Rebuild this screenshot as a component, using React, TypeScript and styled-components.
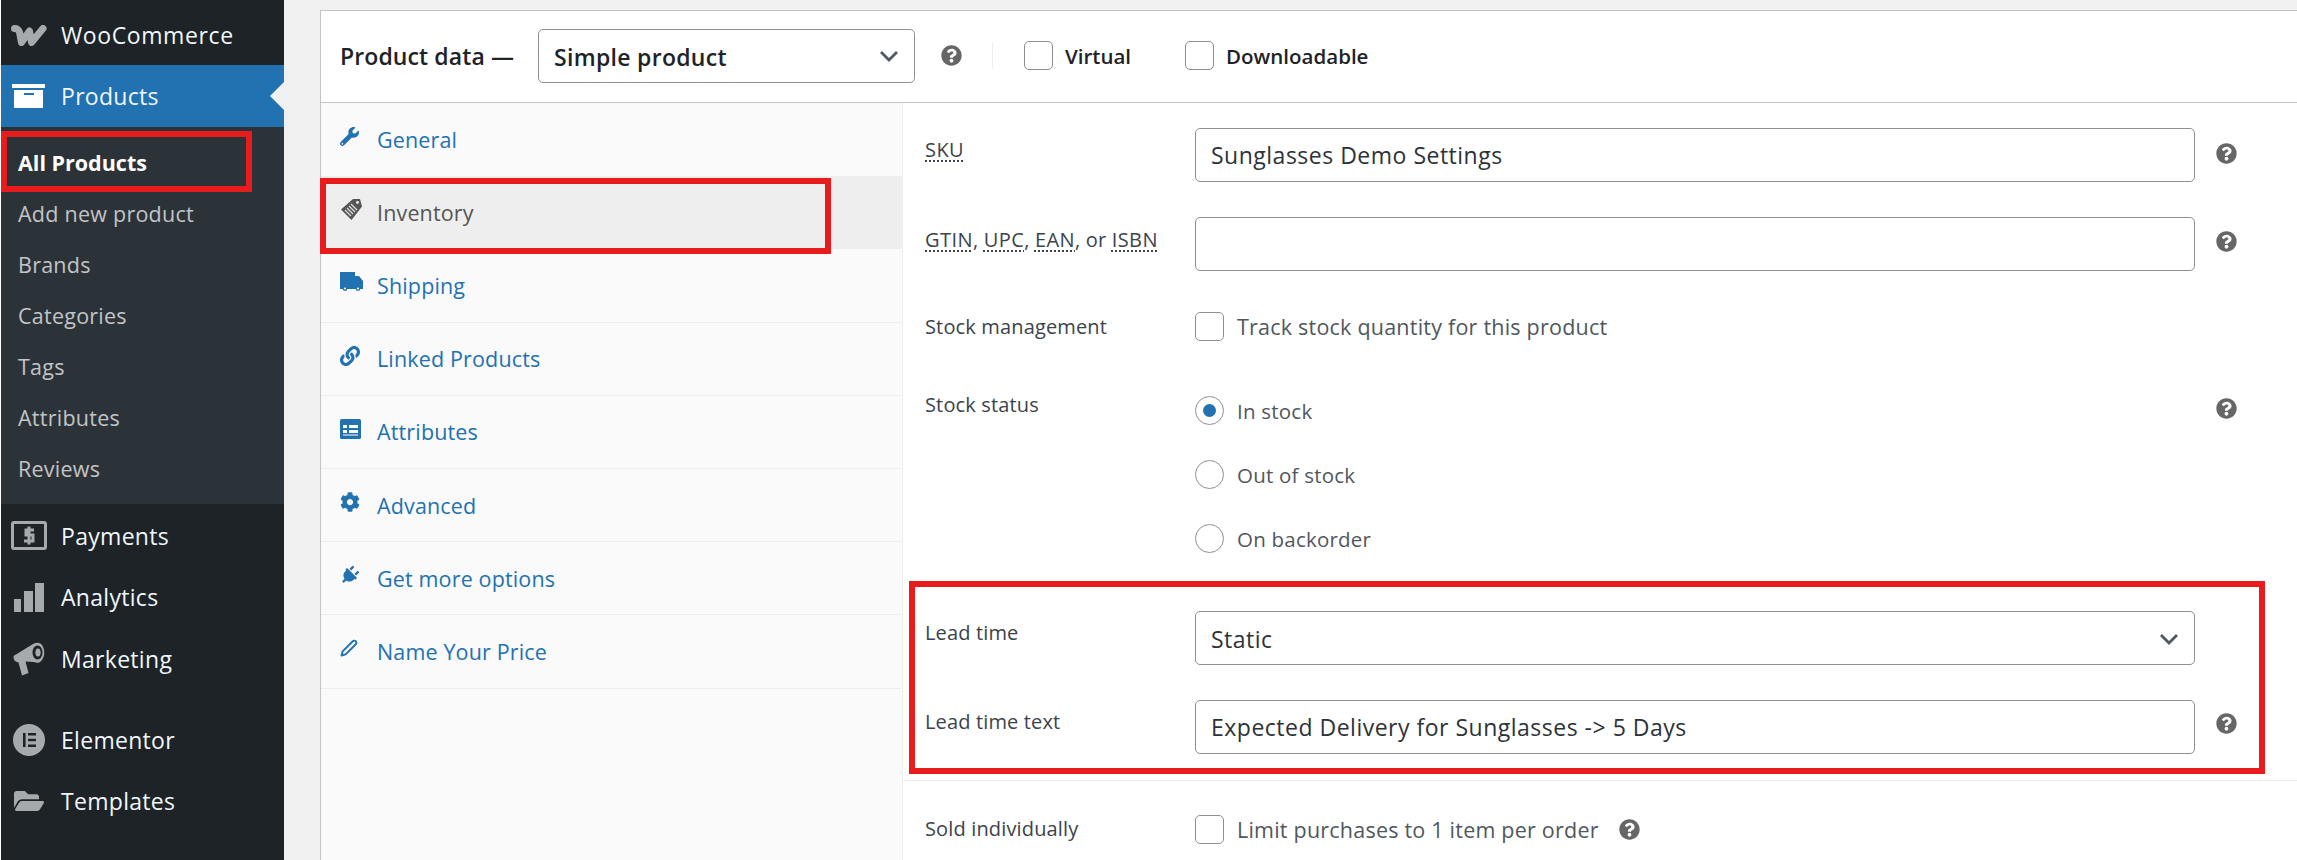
import React from "react";
import styled, { createGlobalStyle } from "styled-components";
import { FaWrench, FaLink, FaCog, FaPlug, FaFolderOpen, FaQuestionCircle } from "react-icons/fa";
import { FiEdit2 } from "react-icons/fi";

const Global = createGlobalStyle`
  html, body { margin: 0; padding: 0; background: #f0f0f1; overflow: hidden; }
  * { box-sizing: border-box; }
  body { font-family: "Open Sans", "Noto Sans", sans-serif; }
`;

const Page = styled.div`
  position: relative;
  display: flex;
  width: 2297px;
  height: 860px;
  overflow: hidden;
  background: #f0f0f1;
  padding-left: 1px;
`;
const WhiteEdge = styled.div`
  position: absolute; left: 0; top: 0; bottom: 0; width: 1px; background: #fff;
`;
const Sidebar = styled.nav`
  flex: 0 0 283px;
  background: #1d2327;
  display: flex;
  flex-direction: column;
`;
const MenuItem = styled.div<{ $active?: boolean; $h?: number; $after?: number; $pad?: number; $ls?: number }>`
  position: relative;
  height: ${(p) => p.$h ?? 61.6}px;
  margin-bottom: ${(p) => p.$after ?? 0}px;
  padding-top: ${(p) => p.$pad ?? 2}px;
  display: flex;
  align-items: center;
  background: ${(p) => (p.$active ? "#2271b1" : "transparent")};
  color: #f0f6fc;
  font-size: 23px;
  letter-spacing: ${(p) => p.$ls ?? 0.3}px;
  ${(p) => p.$active && `
    &::after {
      content: ""; position: absolute; right: 0; top: 17px;
      border: 14px solid transparent; border-left: 0; border-right: 14px solid #f0f0f1;
    }
  `}
`;
const MenuIcon = styled.span`
  flex: 0 0 60px;
  display: flex;
  justify-content: center;
  padding-right: 5px;
  color: #a7aaad;
  svg { display: block; }
`;
const SubMenu = styled.div`
  background: #2c3338;
  padding: 10px 0;
  height: 377px;
`;
const SubItem = styled.div<{ $current?: boolean }>`
  height: 51px;
  display: flex;
  align-items: center;
  padding-left: 17px;
  font-size: 21.5px;
  letter-spacing: ${(p) => (p.$current ? 0 : 0.25)}px;
  color: ${(p) => (p.$current ? "#fff" : "#c3c4c7")};
  font-weight: ${(p) => (p.$current ? 700 : 400)};
`;
const Main = styled.main`
  flex: 1;
  padding: 10px 0 0 36px;
  min-width: 0;
`;
const Panel = styled.section`
  height: 100%;
  background: #fff;
  border-left: 1px solid #c3c4c7;
  border-top: 1px solid #c3c4c7;
  display: flex;
  flex-direction: column;
`;
const PanelHeader = styled.header`
  flex: 0 0 92px;
  border-bottom: 1px solid #c3c4c7;
  display: flex;
  align-items: center;
  padding: 0 0 2px 19px;
  color: #1d2327;
`;
const HeaderTitle = styled.strong`
  font-size: 23px;
  font-weight: 600;
  width: 198px;
  letter-spacing: 0.1px;
  white-space: nowrap;
`;
const SelectBox = styled.div<{ $w?: number }>`
  width: ${(p) => p.$w ?? 1000}px;
  height: 54px;
  border: 1px solid #8c8f94;
  border-radius: 5px;
  background: #fff;
  display: flex;
  align-items: center;
  justify-content: space-between;
  padding: 1px 15px 0;
  font-size: 23px;
  letter-spacing: 0.5px;
  color: #2c3338;
  flex: none;
`;
const StrongValue = styled.span`
  font-weight: 600;
  color: #1d2327;
  letter-spacing: 0.3px;
  padding-top: 2px;
`;
const ChevronMark = styled.svg`
  width: 20px;
  height: 12px;
  fill: none;
  stroke: #50575e;
  stroke-width: 2.8px;
  flex: none;
`;
const HelpTip = styled(FaQuestionCircle)<{ $top?: number }>`
  color: #666;
  width: 21px;
  height: 21px;
  flex: none;
  margin-top: ${(p) => p.$top ?? 0}px;
`;
const HeaderHelp = styled.span`
  display: flex; margin-left: 26px;
`;
const Divider = styled.span`
  width: 1px; height: 27px; background: #eee; margin: 0 31px 0 30px;
`;
const CheckBox = styled.span<{ $round?: boolean }>`
  position: relative;
  flex: none;
  width: 29px;
  height: 29px;
  border: 1px solid #8c8f94;
  border-radius: ${(p) => (p.$round ? "50%" : "5px")};
  background: #fff;
`;
const RadioDot = styled.span`
  position: absolute; inset: 7px; border-radius: 50%; background: #2271b1;
`;
const HeaderCheck = styled.label<{ $gap: number }>`
  display: flex;
  align-items: center;
  gap: 12px;
  font-size: 20.5px;
  font-weight: 600;
  margin-right: ${(p) => p.$gap}px;
  color: #1d2327;
  letter-spacing: 0;
`;
const Body = styled.div`
  flex: 1;
  display: flex;
  min-height: 0;
`;
const Tabs = styled.ul`
  flex: 0 0 582px;
  margin: 0;
  padding: 0;
  list-style: none;
  background: #fafafa;
  border-right: 1px solid #eee;
`;
const Tab = styled.li<{ $active?: boolean; $line?: boolean }>`
  height: 73.2px;
  display: flex;
  align-items: center;
  padding-left: 19px;
  font-size: 21.5px;
  letter-spacing: 0.15px;
  color: ${(p) => (p.$active ? "#555" : "#2271b1")};
  background: ${(p) => (p.$active ? "#eee" : "transparent")};
  border-bottom: 1px solid ${(p) => (p.$line ? "#eee" : "transparent")};
`;
const TabIcon = styled.span`
  flex: 0 0 37px;
  display: flex;
  margin-top: -6px;
  svg { display: block; }
`;
const Form = styled.div`
  flex: 1;
  min-width: 0;
  color: #3c434a;
`;
const Row = styled.div<{ $top: number }>`
  display: grid;
  grid-template-columns: 270px 1000px 42px;
  padding-left: 22px;
  margin-top: ${(p) => p.$top}px;
  align-items: start;
`;
const HelpCell = styled.span`
  display: flex;
  justify-content: flex-end;
`;
const FieldLabel = styled.label<{ $top?: number }>`
  font-size: 20px;
  line-height: 24px;
  margin-top: ${(p) => p.$top ?? 0}px;
  letter-spacing: 0.15px;
`;
const Abbr = styled.abbr`
  text-decoration: underline dotted;
  text-underline-offset: 3px;
  letter-spacing: 0.45px;
`;
const TextField = styled.div`
  height: 54px;
  border: 1px solid #8c8f94;
  border-radius: 5px;
  background: #fff;
  display: flex;
  align-items: center;
  padding: 0 15px;
  font-size: 23px;
  letter-spacing: 0.5px;
  color: #2c3338;
`;
const ChoiceLine = styled.div<{ $small?: boolean }>`
  display: flex;
  align-items: center;
  gap: 13px;
  font-size: ${(p) => (p.$small ? 20.5 : 21.5)}px;
  color: #50575e;
  letter-spacing: 0.22px;
  white-space: nowrap;
`;
const RowRule = styled.hr`
  margin: 26px 0 0;
  border: 0;
  border-top: 1px solid #eee;
`;
const SoldRow = styled.div`
  display: grid;
  grid-template-columns: 270px 1fr;
  padding-left: 22px;
  margin-top: 34px;
  align-items: center;
`;
const SoldChoice = styled.div`
  display: flex;
  align-items: center;
  gap: 20px;
`;
const Annotation = styled.div<{ $l: number; $t: number; $w: number; $h: number }>`
  position: absolute;
  left: ${(p) => p.$l}px;
  top: ${(p) => p.$t}px;
  width: ${(p) => p.$w}px;
  height: ${(p) => p.$h}px;
  border: 6px solid #e81c1c;
  pointer-events: none;
`;

const Chevron = () => (
  <ChevronMark viewBox="0 0 20 12"><path d="M2 2L10 10L18 2" /></ChevronMark>
);
const WooLogo = () => (
  <svg width="36" height="21" viewBox="0 0 36 21" fill="none" stroke="currentColor" strokeWidth="7" strokeLinejoin="round" strokeLinecap="round">
    <path d="M3.5 3.5C6 3.5 7.5 4.5 8.5 7L10.5 17.5L18.5 6L20.5 17.5L32 3.5" />
  </svg>
);
const ArchiveIcon = () => (
  <svg width="33" height="24" viewBox="0 0 33 24">
    <path fill="#fff" d="M0 0H33V4H0ZM2 6H31V24H2Z" />
    <rect x="12" y="9" width="10" height="2" fill="#2271b1" />
  </svg>
);
const PaymentsIcon = () => (
  <svg width="36" height="29" viewBox="0 0 36 29" fill="none" stroke="currentColor">
    <rect x="1.5" y="1.5" width="33" height="26" rx="1.5" strokeWidth="3" />
    <path d="M23 9H15V14H22V20H13M18 5.5V23.5" strokeWidth="3" />
  </svg>
);
const BarsIcon = () => (
  <svg width="30" height="29" viewBox="0 0 30 29" fill="currentColor">
    <rect x="0" y="16" width="7" height="13" />
    <rect x="10" y="8" width="9" height="21" />
    <rect x="21" y="0" width="9" height="29" />
  </svg>
);
const MegaphoneIcon = () => (
  <svg width="32" height="34" viewBox="0 0 32 34">
    <path fill="currentColor" d="M0.5 15C0.5 13.5 1.5 13 3 12.5L20 2C24 0 27 0.5 29 3C32 7 32 14 29 18C27 21 24 21.5 21 20L12.5 19.5L15.5 31L9 33.5L5.5 20.5C2 20 0.5 18 0.5 15Z" />
    <ellipse cx="24.5" cy="10.5" rx="5" ry="7" fill="#1d2327" />
    <ellipse cx="25" cy="10.5" rx="2.6" ry="4" fill="currentColor" />
  </svg>
);
const ElementorIcon = () => (
  <svg width="32" height="32" viewBox="0 0 32 32">
    <circle cx="16" cy="16" r="16" fill="currentColor" />
    <path fill="#1d2327" d="M10 9H12.6V23H10ZM15 9H23V11.6H15ZM15 14.7H23V17.3H15ZM15 20.4H23V23H15Z" />
  </svg>
);
const TagIcon = () => (
  <svg width="23" height="23" viewBox="0 0 23 23">
    <path fill="#555" d="M1 11.5L13 1H20L22 8.5L11.5 22Z" />
    <path stroke="#ddd" strokeWidth="1.2" d="M5 12L11 18M7 10L13 16M9 8L15 14M11 6L17 12" />
    <circle cx="17.5" cy="4.5" r="1.4" fill="#eee" />
  </svg>
);
const TruckIcon = () => (
  <svg width="23" height="20" viewBox="0 0 23 20">
    <path fill="#2271b1" d="M0 0H15V4H19L23 9V17H0Z" />
    <circle cx="5" cy="16.5" r="2.4" fill="#2271b1" />
    <circle cx="18" cy="16.5" r="2.4" fill="#2271b1" />
    <circle cx="5" cy="16.5" r="1.1" fill="#fafafa" />
    <circle cx="18" cy="16.5" r="1.1" fill="#fafafa" />
  </svg>
);
const ListIcon = () => (
  <svg width="21" height="20" viewBox="0 0 21 20">
    <rect width="21" height="20" rx="1.5" fill="#2271b1" />
    <path fill="#fff" d="M3 6H7V9H3ZM9 6H18V9H9ZM3 11H7V14H3ZM9 11H18V14H9ZM3 15.5H18V16.5H3Z" />
  </svg>
);
const PlugIcon = styled(FaPlug)`
  transform: rotate(45deg);
`;

const sub = ["Add new product", "Brands", "Categories", "Tags", "Attributes", "Reviews"];
const Help = ({ top }: { top?: number }) => (
  <HelpCell>
    <HelpTip $top={top} />
  </HelpCell>
);

export default function App() {
  return (
    <Page>
      <Global />
      <WhiteEdge />
      <Sidebar>
        <MenuItem $h={65} $pad={5} $ls={0.6}>
          <MenuIcon><WooLogo /></MenuIcon>WooCommerce
        </MenuItem>
        <MenuItem $active $h={62} $pad={0}>
          <MenuIcon><ArchiveIcon /></MenuIcon>Products
        </MenuItem>
        <SubMenu>
          <SubItem $current>All Products</SubItem>
          {sub.map((s) => <SubItem key={s}>{s}</SubItem>)}
        </SubMenu>
        <MenuItem><MenuIcon><PaymentsIcon /></MenuIcon>Payments</MenuItem>
        <MenuItem><MenuIcon><BarsIcon /></MenuIcon>Analytics</MenuItem>
        <MenuItem $after={19}><MenuIcon><MegaphoneIcon /></MenuIcon>Marketing</MenuItem>
        <MenuItem><MenuIcon><ElementorIcon /></MenuIcon>Elementor</MenuItem>
        <MenuItem><MenuIcon><FaFolderOpen size={30} /></MenuIcon>Templates</MenuItem>
      </Sidebar>
      <Main>
        <Panel>
          <PanelHeader>
            <HeaderTitle>Product data —</HeaderTitle>
            <SelectBox $w={377}>
              <StrongValue>Simple product</StrongValue>
              <Chevron />
            </SelectBox>
            <HeaderHelp><HelpTip /></HeaderHelp>
            <Divider />
            <HeaderCheck $gap={54}><CheckBox />Virtual</HeaderCheck>
            <HeaderCheck $gap={0}><CheckBox />Downloadable</HeaderCheck>
          </PanelHeader>
          <Body>
            <Tabs>
              <Tab><TabIcon><FaWrench size={19} /></TabIcon>General</Tab>
              <Tab $active><TabIcon><TagIcon /></TabIcon>Inventory</Tab>
              <Tab $line><TabIcon><TruckIcon /></TabIcon>Shipping</Tab>
              <Tab $line><TabIcon><FaLink size={20} /></TabIcon>Linked Products</Tab>
              <Tab $line><TabIcon><ListIcon /></TabIcon>Attributes</Tab>
              <Tab $line><TabIcon><FaCog size={20} /></TabIcon>Advanced</Tab>
              <Tab $line><TabIcon><PlugIcon size={19} /></TabIcon>Get more options</Tab>
              <Tab $line><TabIcon><FiEdit2 size={18} strokeWidth={2.6} /></TabIcon>Name Your Price</Tab>
            </Tabs>
            <Form>
              <Row $top={25}>
                <FieldLabel $top={10}><Abbr>SKU</Abbr></FieldLabel>
                <TextField>Sunglasses Demo Settings</TextField>
                <Help top={15} />
              </Row>
              <Row $top={35}>
                <FieldLabel $top={11}><Abbr>GTIN</Abbr>, <Abbr>UPC</Abbr>, <Abbr>EAN</Abbr>, or <Abbr>ISBN</Abbr></FieldLabel>
                <TextField />
                <Help top={14} />
              </Row>
              <Row $top={41}>
                <FieldLabel $top={3}>Stock management</FieldLabel>
                <ChoiceLine><CheckBox />Track stock quantity for this product</ChoiceLine>
              </Row>
              <Row $top={55}>
                <FieldLabel $top={-3}>Stock status</FieldLabel>
                <ChoiceLine $small><CheckBox $round><RadioDot /></CheckBox>In stock</ChoiceLine>
                <Help top={2} />
              </Row>
              <Row $top={35}>
                <span />
                <ChoiceLine $small><CheckBox $round />Out of stock</ChoiceLine>
              </Row>
              <Row $top={35}>
                <span />
                <ChoiceLine $small><CheckBox $round />On backorder</ChoiceLine>
              </Row>
              <Row $top={58}>
                <FieldLabel $top={10}>Lead time</FieldLabel>
                <SelectBox>Static<Chevron /></SelectBox>
              </Row>
              <Row $top={35}>
                <FieldLabel $top={10}>Lead time text</FieldLabel>
                <TextField>Expected Delivery for Sunglasses -&gt; 5 Days</TextField>
                <Help top={13} />
              </Row>
              <RowRule />
              <SoldRow>
                <FieldLabel $top={-2}>Sold individually</FieldLabel>
                <SoldChoice>
                  <ChoiceLine><CheckBox />Limit purchases to 1 item per order</ChoiceLine>
                  <HelpTip />
                </SoldChoice>
              </SoldRow>
            </Form>
          </Body>
        </Panel>
      </Main>
      <Annotation $l={1} $t={131} $w={251} $h={61} />
      <Annotation $l={320} $t={178} $w={511} $h={76} />
      <Annotation $l={909} $t={581} $w={1356} $h={193} />
    </Page>
  );
}
